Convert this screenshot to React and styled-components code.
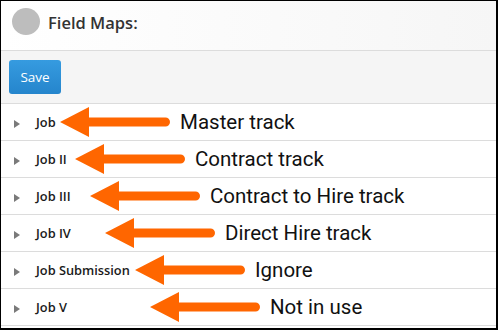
import React from "react";
import styled, { createGlobalStyle } from "styled-components";

const Global = createGlobalStyle`
  html, body { margin: 0; padding: 0; background: #fff; }
  * { box-sizing: border-box; }
`;

const Frame = styled.div`
  width: 498px;
  height: 330px;
  border-style: solid;
  border-color: #000;
  border-width: 1px 2px 2px 1px;
  background: #fff;
  display: flex;
  flex-direction: column;
  overflow: hidden;
  font-family: "Open Sans", "Liberation Sans", sans-serif;
`;

const Header = styled.div`
  height: 50px;
  display: flex;
  align-items: flex-start;
  gap: 8px;
  padding: 7px 0 0 11px;
  background: linear-gradient(to right, #ffffff, #f6f6f6);
  border-bottom: 1px solid #dcdcdc;
`;

const Avatar = styled.div`
  width: 28px;
  height: 27px;
  border-radius: 50%;
  background: #bdbdbd;
`;

const Title = styled.h1`
  margin: 0;
  font-size: 16.5px;
  line-height: 30px;
  font-weight: 600;
  color: #333;
`;

const Toolbar = styled.div`
  height: 53px;
  display: flex;
  align-items: flex-start;
  padding: 9px 8px 0;
  background: #f5f5f5;
  border-bottom: 1px solid #dcdcdc;
`;

const SaveButton = styled.button`
  width: 52px;
  height: 34px;
  border: none;
  border-radius: 3px;
  background: linear-gradient(#369be0, #2585cc);
  color: #fff;
  font-family: "Open Sans", "Liberation Sans", sans-serif;
  font-size: 13.5px;
  padding: 0;
`;

const List = styled.div`
  display: flex;
  flex-direction: column;
`;

const Row = styled.div`
  position: relative;
  height: 37px;
  display: flex;
  align-items: center;
  gap: 16px;
  padding-left: 13px;
  border-bottom: 1px solid #dcdcdc;
`;

const Caret = styled.span`
  width: 0;
  height: 0;
  margin-top: 3px;
  border-top: 4.5px solid transparent;
  border-bottom: 4.5px solid transparent;
  border-left: 6px solid #7a7a7a;
`;

const Label = styled.span`
  font-size: 12.8px;
  font-weight: 600;
  color: #1a1a1a;
`;

const Annotation = styled.div`
  position: absolute;
  top: 0;
  bottom: 1px;
  display: flex;
  align-items: center;
  gap: 10px;
`;

const Note = styled.span`
  font-family: Roboto, "Liberation Sans", sans-serif;
  font-size: 20.5px;
  color: #111;
  white-space: nowrap;
`;

const Arrow = () => (
  <svg width="110" height="30" viewBox="0 0 110 30">
    <path
      d="M0 15 L29 0 L29 10.5 L105.5 10.5 A4.5 4.5 0 0 1 105.5 19.5 L29 19.5 L29 30 Z"
      fill="#ff6600"
    />
  </svg>
);

const rows = [
  { label: "Job", note: "Master track", tip: 59 },
  { label: "Job II", note: "Contract track", tip: 74 },
  { label: "Job III", note: "Contract to Hire track", tip: 89 },
  { label: "Job IV", note: "Direct Hire track", tip: 104 },
  { label: "Job Submission", note: "Ignore", tip: 134 },
  { label: "Job V", note: "Not in use", tip: 149 },
];

export default function App() {
  return (
    <>
      <Global />
      <Frame>
        <Header>
          <Avatar />
          <Title>Field Maps:</Title>
        </Header>
        <Toolbar>
          <SaveButton>Save</SaveButton>
        </Toolbar>
        <List>
          {rows.map((r) => (
            <Row key={r.label}>
              <Caret />
              <Label>{r.label}</Label>
              <Annotation style={{ left: r.tip }}>
                <Arrow />
                <Note>{r.note}</Note>
              </Annotation>
            </Row>
          ))}
        </List>
      </Frame>
    </>
  );
}
